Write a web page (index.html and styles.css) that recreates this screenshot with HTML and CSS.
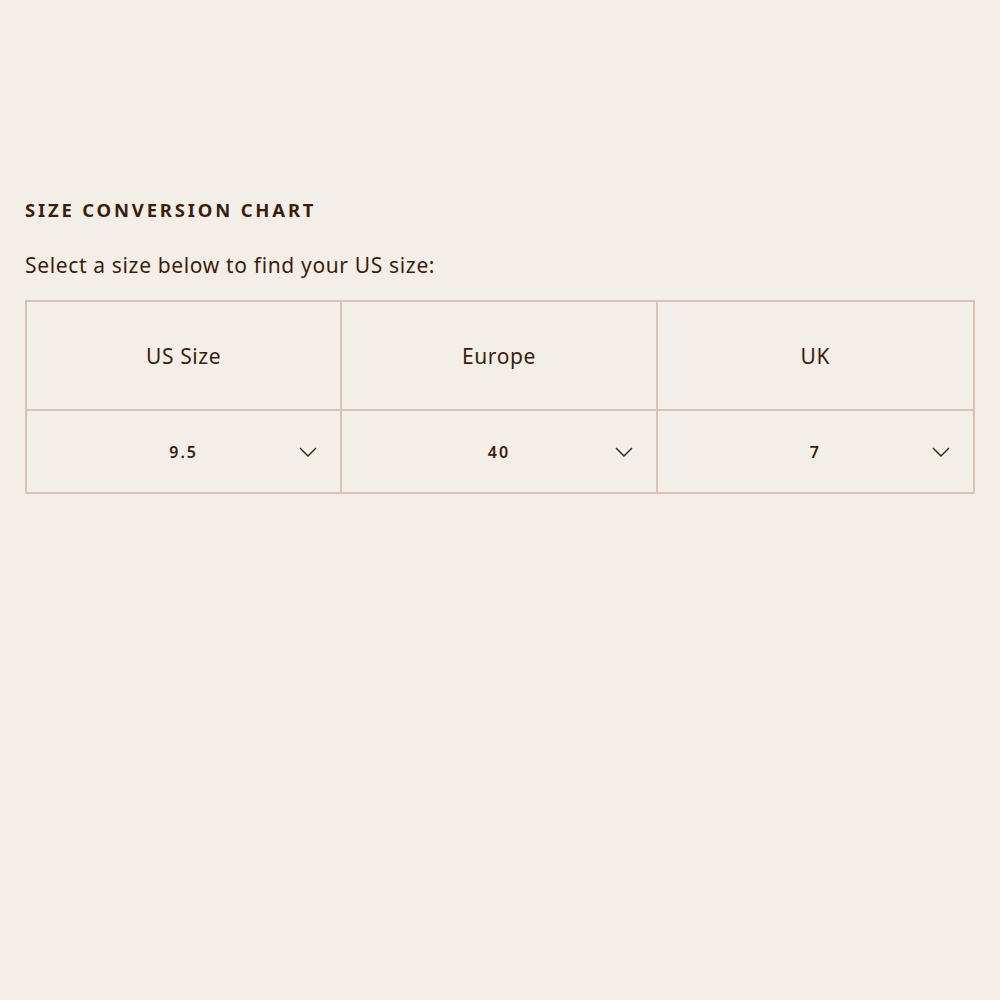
FILE: index.html
```html
<!DOCTYPE html>
<html lang="en">
<head>
<meta charset="utf-8">
<title>Size Conversion Chart</title>
<link rel="stylesheet" href="styles.css">
</head>
<body>
<section class="chart">
  <h2 class="chart-title">SIZE CONVERSION CHART</h2>
  <p class="chart-intro">Select a size below to find your US size:</p>
  <div class="chart-grid">
    <div class="cell head">US Size</div>
    <div class="cell head">Europe</div>
    <div class="cell head">UK</div>
    <div class="cell pick"><span class="val">9.5</span><svg class="chev" viewBox="0 0 18 10" width="18" height="10"><path d="M1 1 L9 9 L17 1" fill="none" stroke="#3b1d0c" stroke-width="1.4"/></svg></div>
    <div class="cell pick"><span class="val">40</span><svg class="chev" viewBox="0 0 18 10" width="18" height="10"><path d="M1 1 L9 9 L17 1" fill="none" stroke="#3b1d0c" stroke-width="1.4"/></svg></div>
    <div class="cell pick"><span class="val">7</span><svg class="chev" viewBox="0 0 18 10" width="18" height="10"><path d="M1 1 L9 9 L17 1" fill="none" stroke="#3b1d0c" stroke-width="1.4"/></svg></div>
  </div>
</section>
</body>
</html>
```

FILE: styles.css
```css
html, body {
  margin: 0;
  padding: 0;
  background: #f3efe8;
}
body {
  font-family: "Noto Sans", "Lato", sans-serif;
  color: #3b1d0c;
}
.chart {
  padding: 198px 25px 0 25px;
}
.chart-title {
  margin: 0;
  font-size: 18.5px;
  line-height: 24px;
  font-weight: 700;
  letter-spacing: 2.8px;
}
.chart-intro {
  margin: 30px 0 0 0;
  font-size: 21px;
  line-height: 26px;
  font-weight: 400;
  letter-spacing: 0.65px;
}
.chart-grid {
  margin-top: 22px;
  display: grid;
  grid-template-columns: repeat(3, 1fr);
  grid-template-rows: 109px 81px;
  border: 2px solid #d6c2b6;
  width: 950px;
  box-sizing: border-box;
}
.cell {
  display: flex;
  align-items: center;
  justify-content: center;
  position: relative;
  border-right: 2px solid #d6c2b6;
}
.cell:nth-child(3n) {
  border-right: none;
}
.head {
  border-bottom: 2px solid #d6c2b6;
  font-size: 21px;
  letter-spacing: 0.6px;
  padding-bottom: 0;
}
.pick .val {
  font-size: 16px;
  font-weight: 600;
  letter-spacing: 2px;
  padding-top: 1px;
}
.chev {
  position: absolute;
  right: 23px;
  top: 36px;
}
```
